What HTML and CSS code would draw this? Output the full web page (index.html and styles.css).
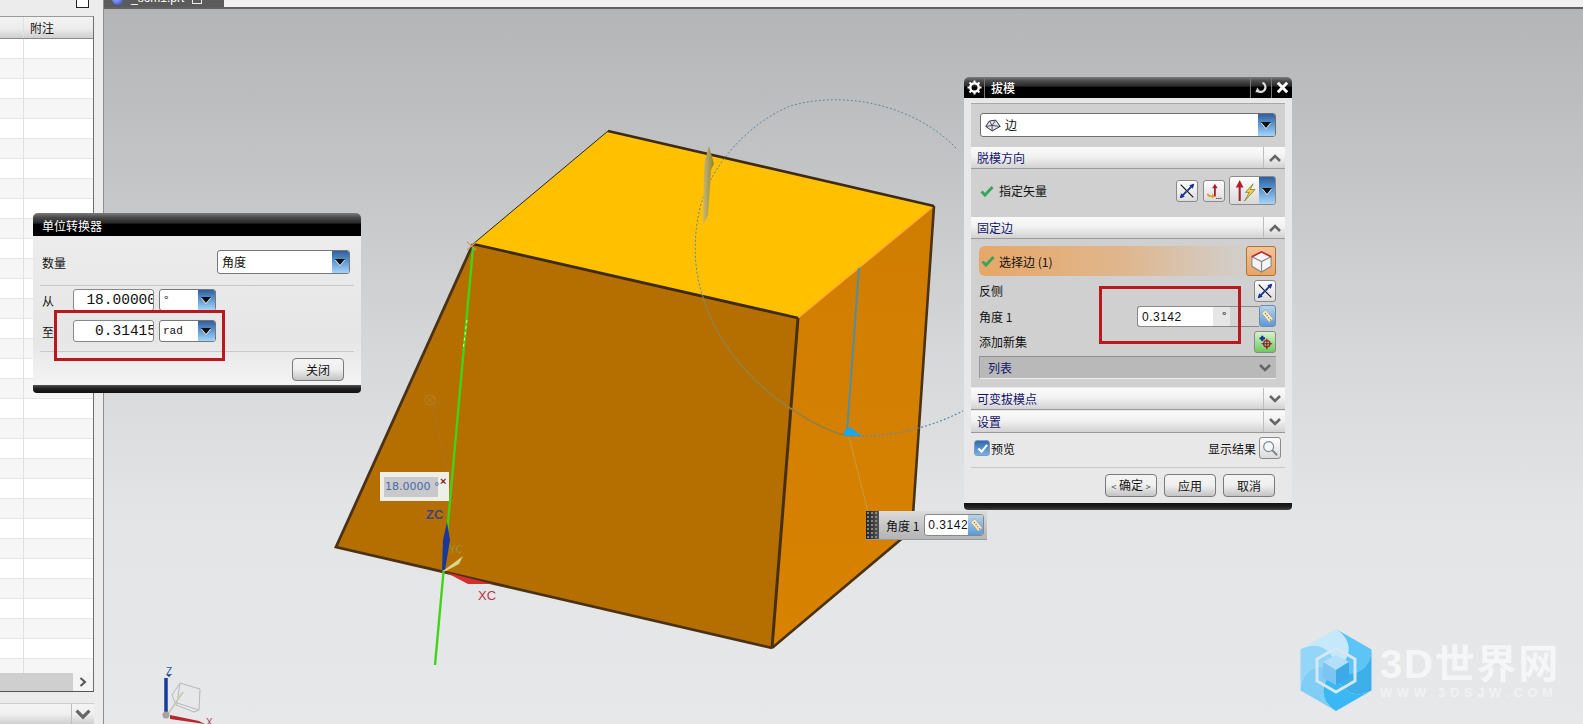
FILE: index.html
```html
<!DOCTYPE html>
<html lang="zh">
<head>
<meta charset="utf-8">
<title>拔模</title>
<link rel="stylesheet" href="styles.css">
</head>
<body>
<svg class="defs" width="0" height="0" aria-hidden="true">
  <symbol id="i-swap" viewBox="0 0 20 20">
    <path d="M3 3 17 17" stroke="#111" stroke-width="1.2"/>
    <path d="M17 3 10.5 9.5M3 17 9.5 10.5" stroke="#1a2f9a" stroke-width="2"/>
    <path d="M18 2 12.5 3.5 16.5 7.5ZM2 18 7.5 16.5 3.5 12.5Z" fill="#1a2f9a"/>
  </symbol>
  <symbol id="i-chev-up" viewBox="0 0 14 10"><path d="M2 8 7 3 12 8" fill="none" stroke="#666" stroke-width="2.6"/></symbol>
  <symbol id="i-chev-down" viewBox="0 0 14 10"><path d="M2 2 7 7 12 2" fill="none" stroke="#666" stroke-width="2.6"/></symbol>
  <symbol id="i-check" viewBox="0 0 14 12"><path d="M1.5 6.5 5 10 12.5 2" fill="none" stroke="#35a85e" stroke-width="3"/></symbol>
  <symbol id="i-ruler" viewBox="0 0 18 20">
    <path d="M2 6 7 2 16 13 11 17Z" fill="#f1ead0" stroke="#a89c70" stroke-width=".8"/>
    <path d="M6 7 7 6M8 9.500 9 8.500M10 12 11 11M12 14.500 13 13.500" stroke="#8a6a2a" stroke-width="1.300"/>
  </symbol>
</svg>

<div class="desktop">
  <aside class="side">
    <div class="side-top"><span class="mini-box"></span></div>
    <div class="table">
      <div class="thead"><span class="col-a"></span><span class="col-b">附注</span></div>
      <div class="tbody">
        <div class="row"><span class="col-a"></span><span class="col-b"></span></div>
        <div class="row"><span class="col-a"></span><span class="col-b"></span></div>
        <div class="row"><span class="col-a"></span><span class="col-b"></span></div>
        <div class="row"><span class="col-a"></span><span class="col-b"></span></div>
        <div class="row"><span class="col-a"></span><span class="col-b"></span></div>
        <div class="row"><span class="col-a"></span><span class="col-b"></span></div>
        <div class="row"><span class="col-a"></span><span class="col-b"></span></div>
        <div class="row"><span class="col-a"></span><span class="col-b"></span></div>
        <div class="row"><span class="col-a"></span><span class="col-b"></span></div>
        <div class="row"><span class="col-a"></span><span class="col-b"></span></div>
        <div class="row"><span class="col-a"></span><span class="col-b"></span></div>
        <div class="row"><span class="col-a"></span><span class="col-b"></span></div>
        <div class="row"><span class="col-a"></span><span class="col-b"></span></div>
        <div class="row"><span class="col-a"></span><span class="col-b"></span></div>
        <div class="row"><span class="col-a"></span><span class="col-b"></span></div>
        <div class="row"><span class="col-a"></span><span class="col-b"></span></div>
        <div class="row"><span class="col-a"></span><span class="col-b"></span></div>
        <div class="row"><span class="col-a"></span><span class="col-b"></span></div>
        <div class="row"><span class="col-a"></span><span class="col-b"></span></div>
        <div class="row"><span class="col-a"></span><span class="col-b"></span></div>
        <div class="row"><span class="col-a"></span><span class="col-b"></span></div>
        <div class="row"><span class="col-a"></span><span class="col-b"></span></div>
        <div class="row"><span class="col-a"></span><span class="col-b"></span></div>
        <div class="row"><span class="col-a"></span><span class="col-b"></span></div>
        <div class="row"><span class="col-a"></span><span class="col-b"></span></div>
        <div class="row"><span class="col-a"></span><span class="col-b"></span></div>
        <div class="row"><span class="col-a"></span><span class="col-b"></span></div>
        <div class="row"><span class="col-a"></span><span class="col-b"></span></div>
        <div class="row"><span class="col-a"></span><span class="col-b"></span></div>
        <div class="row"><span class="col-a"></span><span class="col-b"></span></div>
        <div class="row"><span class="col-a"></span><span class="col-b"></span></div>
        <div class="row"><span class="col-a"></span><span class="col-b"></span></div>
      </div>
      <div class="hscroll"><span class="thumb"></span><svg class="hs-arrow" viewBox="0 0 10 12"><path d="M2.500 2 7 6 2.500 10" fill="none" stroke="#555" stroke-width="2"/></svg></div>
    </div>
    <div class="side-foot"><span class="foot-btn"><svg class="foot-chev"><use href="#i-chev-down"/></svg></span></div>
  </aside>

  <main class="work">
    <div class="tabs">
      <div class="tab">
        <span class="ball"></span><span class="tab-name">_som1.prt</span><span class="tab-box"></span>
      </div>
    </div>
    <div class="viewport">
      <svg class="scene" viewBox="104 9 1479 715" preserveAspectRatio="none">
        <defs>
          <linearGradient id="g-right" x1="0" y1="0" x2="0" y2="1"><stop offset="0" stop-color="#cf7d02"/><stop offset="1" stop-color="#d88200"/></linearGradient>
          <linearGradient id="g-arrow" x1="0" y1="0" x2="1" y2="0"><stop offset="0" stop-color="#c9b877"/><stop offset="1" stop-color="#8f8333"/></linearGradient>
        </defs>
        <polygon points="798,318 934,206 912,530 772,648" fill="url(#g-right)"/>
        <polygon points="473,244 798,318 772,648 336,547" fill="#b56e00"/>
        <polygon points="608,131 934,206 798,318 473,244" fill="#ffc000"/>
        <path d="M798 318 934 206" stroke="#ffa838" stroke-width="1.500"/>
        <path d="M608 131 473 244" stroke="#2f2410" stroke-width="1"/>
        <path d="M608 131 934 206" stroke="#3d2a10" stroke-width="2.600"/>
        <path d="M473 244 798 318" stroke="#3d2a10" stroke-width="2.800"/>
        <path d="M934 206 912 530 772 648" fill="none" stroke="#4a3215" stroke-width="2.600"/>
        <path d="M798 318 772 648" stroke="#463012" stroke-width="3"/>
        <path d="M473 244 336 547 772 648" fill="none" stroke="#4a3215" stroke-width="2.800"/>

        <path d="M703 297C690 260 695 215 706 190 716 165 745 125 790 106 845 90 915 105 957 149" fill="none" stroke="#5c8aa0" stroke-width="1" stroke-dasharray="2 2"/>
        <path d="M703 297C712 330 740 375 790 408 815 425 835 434 850 436" fill="none" stroke="#97813a" stroke-width="1.500"/>
        <path d="M850 436C885 438 925 430 963 411" fill="none" stroke="#5f8ca6" stroke-width="1.200" stroke-dasharray="2 2"/>
        <path d="M859 268 847 432" stroke="#4f8fa4" stroke-width="2"/>
        <path d="M844 431 850 427 862 436 844 436Z" fill="#1fa6e0"/>
        <path d="M849 437 868 512" stroke="#c99a40" stroke-width="1"/>

        <path d="M709 146 714 164 711 170 708 215 703 225 704 170 705 160Z" fill="url(#g-arrow)"/>

        <path d="M467 242 476 250M476 242 467 250" stroke="#c9a06a" stroke-width="1.200"/>
        <circle cx="430" cy="400" r="5" fill="none" stroke="#bb8026" stroke-width="1"/>
        <path d="M425 395 435 405M435 395 425 405" stroke="#bb8026" stroke-width="1"/>
        <path d="M432 402 447 472M434 400 456 408" stroke="#a9742a" stroke-width=".8"/>

        <path d="M473 248 435 665" stroke="#3fd31a" stroke-width="2.400"/>
        <path d="M467 320 463 350" stroke="#e9f08a" stroke-width="1" stroke-dasharray="3 3"/>
        <path d="M447 522 450 540 445 570 442 570 443 540Z" fill="#17399c"/>
        <path d="M443 571 459 559 463 556 459 564 446 571Z" fill="#d8d48c"/>
        <path d="M445 572 492 584 468 584Z" fill="#d4302e"/>
        <text class="t-axis t-zc" x="426" y="519">ZC</text>
        <text class="t-axis t-yc" x="449" y="553">YC</text>
        <text class="t-axis t-xc" x="478" y="600">XC</text>

        <path d="M166 714 V678" stroke="#173c9a" stroke-width="3.500"/>
        <path d="M169 677 166.500 675 171 675" fill="#173c9a"/>
        <g fill="none" stroke="#b5b8bc" stroke-width="1">
          <path d="M180 683 200 689 199 710 177 703Z"/>
          <path d="M172 695 176 705 194 712 199 710M172 695 180 683M176 705 177 703"/>
        </g>
        <path d="M168 714 183 692" stroke="#c9ccb4" stroke-width="2"/>
        <circle cx="166" cy="715" r="3.500" fill="#a8a39e"/>
        <path d="M170 715 199 721 205 724 170 719Z" fill="#b8272b"/>
        <text class="t-triad t-z" x="166" y="675">Z</text>
        <text class="t-triad t-x" x="206" y="726">X</text>
      </svg>

      <div class="tag">
        <span class="tag-val">18.0000 °</span><span class="tag-x">×</span>
      </div>

      <div class="logo">
        <svg class="logo-mark" viewBox="0 0 72 82">
          <g>
            <path fill="#c5e8fa" d="M36 0 71.500 20.500C70.850 39.360 56.260 50.090 36 41 54 28 52 10 36 0Z" transform="rotate(-60 36 41)"/>
            <path fill="#5cc4f6" d="M36 0 71.500 20.500C70.850 39.360 56.260 50.090 36 41 54 28 52 10 36 0Z"/>
            <path fill="#3db0ea" d="M36 0 71.500 20.500C70.850 39.360 56.260 50.090 36 41 54 28 52 10 36 0Z" transform="rotate(60 36 41)"/>
            <path fill="#3ab8f4" d="M36 0 71.500 20.500C70.850 39.360 56.260 50.090 36 41 54 28 52 10 36 0Z" transform="rotate(120 36 41)"/>
            <path fill="#80cdf6" d="M36 0 71.500 20.500C70.850 39.360 56.260 50.090 36 41 54 28 52 10 36 0Z" transform="rotate(180 36 41)"/>
            <path fill="#93d6f8" d="M36 0 71.500 20.500C70.850 39.360 56.260 50.090 36 41 54 28 52 10 36 0Z" transform="rotate(240 36 41)"/>
          </g>
          <polygon points="36,19 55,30 55,52 36,63 17,52 17,30" fill="none" stroke="#d8e8f2" stroke-width="3"/>
          <polygon points="36,26 49,33 36,41 23,33" fill="#b2e0f9"/>
          <polygon points="23,33 36,41 36,56 23,49" fill="#7ac5f4"/>
          <polygon points="49,33 36,41 36,56 49,49" fill="#3da9e8"/>
        </svg>
        <div class="logo-text">
          <div class="logo-name">3D世界网</div>
          <div class="logo-url">WWW.3DSJW.COM</div>
        </div>
      </div>
    </div>
  </main>

  <section class="dlg dlg-convert">
    <header class="titlebar titlebar-plain"><span class="title">单位转换器</span></header>
    <div class="conv-body">
      <div class="conv-row conv-qty">
        <span class="lbl">数量</span>
        <div class="select select-qty"><span class="select-text">角度</span><span class="drop"></span></div>
      </div>
      <div class="rule rule-a"></div>
      <div class="conv-row conv-val">
        <span class="lbl lbl-short">从</span>
        <div class="num-box"><span class="num">18.00000</span></div>
        <div class="select select-unit"><span class="select-text">°</span><span class="drop"></span></div>
      </div>
      <div class="conv-row conv-val conv-to">
        <span class="lbl lbl-short">至</span>
        <div class="num-box"><span class="num">0.31415</span></div>
        <div class="select select-unit"><span class="select-text mono">rad</span><span class="drop"></span></div>
      </div>
      <div class="rule rule-b"></div>
      <div class="conv-actions"><button class="btn">关闭</button></div>
    </div>
    <footer class="dlg-foot"></footer>
  </section>
  <div class="mark mark-convert"></div>

  <section class="dlg dlg-draft">
    <header class="titlebar">
      <span class="tb-cell tb-gear">
        <svg viewBox="0 0 16 16" class="tb-icon"><circle cx="8" cy="8" r="4.500" fill="none" stroke="#fff" stroke-width="2.600"/><path d="M8 .5V3.500M8 12.500V15.500M.5 8H3.500M12.500 8H15.500M2.700 2.700 4.800 4.800M11.200 11.200 13.300 13.300M13.300 2.700 11.200 4.800M4.800 11.200 2.700 13.300" stroke="#fff" stroke-width="2.200"/></svg>
      </span>
      <span class="title title-draft">拔模</span>
      <span class="tb-cell tb-right">
        <svg viewBox="0 0 16 16" class="tb-icon"><path d="M4 11.500A5 5 0 1 0 9 3" fill="none" stroke="#ddd" stroke-width="2.400"/><path d="M3.500 8 1.500 13 7 13Z" fill="#ddd"/></svg>
      </span>
      <span class="tb-cell tb-right">
        <svg viewBox="0 0 16 16" class="tb-icon"><path d="M3 3 13 13M13 3 3 13" stroke="#fff" stroke-width="3.200"/></svg>
      </span>
    </header>

    <div class="draft-body">
      <div class="panel panel-type">
        <div class="select select-type">
          <svg class="type-icon" viewBox="0 0 20 16"><path d="M6 3 13 2 18 9 9 14 2 9Z" fill="#dfe4ec" stroke="#334" stroke-width="1.100"/><path d="M6 3 9 8 13 2M9 8 9 14M2 9 9 8 18 9" fill="none" stroke="#334" stroke-width=".9"/></svg>
          <span class="select-text">边</span><span class="drop"></span>
        </div>
      </div>

      <div class="group-head"><span class="gh-text">脱模方向</span><span class="gh-btn"><svg class="chev"><use href="#i-chev-up"/></svg></span></div>
      <div class="panel panel-vector">
        <svg class="check"><use href="#i-check"/></svg>
        <span class="row-text">指定矢量</span>
        <span class="spacer"></span>
        <button class="icon-btn"><svg class="ib"><use href="#i-swap"/></svg></button>
        <button class="icon-btn">
          <svg class="ib" viewBox="0 0 20 20"><path d="M11 16V5" stroke="#a1202a" stroke-width="2"/><path d="M11 2 8 7H14Z" fill="#a1202a"/><path d="M3 13C3 16 6 16 9 16" fill="none" stroke="#e59a2a" stroke-width="2"/><path d="M8 12.500 11 16 8 18Z" fill="#e59a2a"/><text class="dots" x="12" y="19">...</text></svg>
        </button>
        <div class="combo">
          <span class="combo-main">
            <svg class="combo-icon" viewBox="0 0 28 26"><path d="M9 24V8" stroke="#a1202a" stroke-width="2.200"/><path d="M9 2 5 10H13Z" fill="#b31f2a"/><path d="M23 6 15 15H19L14 24 25 12H20Z" fill="#e8d34a" stroke="#7d6a20" stroke-width=".7"/></svg>
          </span>
          <span class="drop drop-tall"></span>
        </div>
      </div>

      <div class="group-head"><span class="gh-text">固定边</span><span class="gh-btn"><svg class="chev"><use href="#i-chev-up"/></svg></span></div>
      <div class="panel panel-edge">
        <div class="sel-row">
          <svg class="check"><use href="#i-check"/></svg>
          <span class="row-text">选择边 (1)</span>
          <span class="spacer"></span>
          <button class="cube-btn">
            <svg class="cube-ic" viewBox="0 0 26 26"><path d="M13 3 23 8V18L13 24 3 18V8Z" fill="#f4f4f4" stroke="#888" stroke-width="1.200"/><path d="M3 8 13 13 23 8M13 13V24" fill="none" stroke="#888" stroke-width="1.200"/><path d="M3 8 13 3 23 8" fill="none" stroke="#c0292a" stroke-width="1.600"/></svg>
          </button>
        </div>
        <div class="form-row">
          <span class="row-text">反侧</span><span class="spacer"></span>
          <button class="icon-btn"><svg class="ib"><use href="#i-swap"/></svg></button>
        </div>
        <div class="form-row form-angle">
          <span class="row-text">角度 1</span><span class="spacer"></span>
          <div class="angle-field"><span class="angle-val">0.3142</span><span class="angle-unit">°</span></div>
          <span class="ruler-btn"><svg class="ruler"><use href="#i-ruler"/></svg></span>
        </div>
        <div class="form-row">
          <span class="row-text">添加新集</span><span class="spacer"></span>
          <button class="icon-btn icon-btn-add">
            <svg class="ib" viewBox="0 0 20 20"><path d="M4 6H10M7 3V9" stroke="#1a2f9a" stroke-width="2.400"/><circle cx="12" cy="12" r="3.500" fill="none" stroke="#a1202a" stroke-width="1.500"/><path d="M12 6V18M6 12H18" stroke="#8c1a20" stroke-width="1.200"/></svg>
          </button>
        </div>
        <div class="list-head"><span>列表</span><svg class="chev"><use href="#i-chev-down"/></svg></div>
      </div>

      <div class="group-head group-head-gap"><span class="gh-text">可变拔模点</span><span class="gh-btn"><svg class="chev"><use href="#i-chev-down"/></svg></span></div>
      <div class="group-head group-head-gap"><span class="gh-text">设置</span><span class="gh-btn"><svg class="chev"><use href="#i-chev-down"/></svg></span></div>

      <div class="preview-row">
        <span class="checkbox"><svg viewBox="0 0 14 14" class="cb-mark"><path d="M2.500 7 6 10.500 12 3" fill="none" stroke="#fff" stroke-width="2.200"/></svg></span>
        <span class="row-text">预览</span><span class="spacer"></span>
        <span class="row-text">显示结果</span>
        <button class="icon-btn icon-btn-search">
          <svg class="ib" viewBox="0 0 20 20"><circle cx="8.500" cy="8.500" r="5.500" fill="#f5f8fa" stroke="#7c8894" stroke-width="1.300"/><path d="M12.500 12.500 18 18" stroke="#7c8894" stroke-width="2.200"/></svg>
        </button>
      </div>
      <div class="rule rule-draft"></div>
      <div class="actions">
        <button class="btn"><span class="angle-mark">&lt;</span> 确定 <span class="angle-mark">&gt;</span></button>
        <button class="btn">应用</button>
        <button class="btn">取消</button>
      </div>
    </div>
    <footer class="dlg-foot dlg-foot-draft"></footer>
  </section>
  <div class="mark mark-draft"></div>

  <div class="callout">
    <span class="grip"></span>
    <span class="callout-label">角度 1</span>
    <div class="callout-field"><span class="callout-val">0.3142</span><span class="ruler-btn ruler-btn-s"><svg class="ruler"><use href="#i-ruler"/></svg></span></div>
  </div>
</div>
</body>
</html>
```
FILE: styles.css
```css
* { box-sizing: border-box; }
html, body { margin: 0; padding: 0; height: 100%; overflow: hidden; }
body { font-family: "Noto Sans CJK SC", "Liberation Sans", sans-serif; font-size: 12px; color: #111; }
.defs { position: absolute; }
button { font: inherit; padding: 0; margin: 0; }

.desktop { position: relative; width: 1583px; height: 724px; display: flex; background: #e9e9e9; overflow: hidden; }

/* left list panel */
.side { width: 104px; flex: none; display: flex; flex-direction: column; background: #ececec; border-right: 1px solid #8f8f8f; }
.side-top { height: 16px; display: flex; justify-content: flex-end; padding-right: 14px; }
.mini-box { width: 13px; height: 8px; border: 1px solid #222; border-top: 0; background: #fff; }
.table { width: 94px; height: 676px; border-top: 1px solid #9a9a9a; border-right: 1px solid #6e6e6e; border-bottom: 1px solid #555; display: flex; flex-direction: column; }
.thead { height: 22px; flex: none; display: flex; background: linear-gradient(#f3f3f3, #ececec 55%, #cfcfcf); border-bottom: 1px solid #8a8a8a; }
.col-a { width: 24px; flex: none; border-right: 1px solid #e0e0e0; }
.col-b { flex: 1; padding-left: 6px; line-height: 21px; }
.tbody { flex: 1; overflow: hidden; }
.row { height: 20px; display: flex; background: #fff; border-bottom: 1px solid #e6e6e6; }
.row:nth-child(even) { background: #f6f6f6; }
.hscroll { height: 18px; flex: none; display: flex; align-items: stretch; background: #f4f4f4; }
.thumb { width: 73px; background: #cfcfcf; }
.hs-arrow { width: 10px; height: 12px; margin: 3px 0 0 5px; }
.side-foot { margin: 11px 0 0; width: 94px; height: 21px; border-top: 1px solid #cfcfcf; display: flex; justify-content: flex-end; background: linear-gradient(#f4f4f4, #f0f0f0 50%, #cfcfcf); }
.foot-btn { width: 23px; border-left: 1px solid #bdbdbd; display: flex; justify-content: center; }
.foot-chev { width: 18px; height: 13px; margin-top: 4px; }

/* work area */
.work { flex: 1; display: flex; flex-direction: column; min-width: 0; }
.tabs { height: 9px; flex: none; background: #f0f0f0; border-bottom: 2px solid #616161; }
.tab { width: 120px; height: 7px; background: #5b5b5b; display: flex; align-items: flex-start; overflow: hidden; padding-left: 8px; color: #fff; }
.ball { width: 11px; height: 11px; margin-top: -6px; border-radius: 50%; background: radial-gradient(circle at 40% 40%, #9fb3ff, #2a3fc0); flex: none; }
.tab-name { margin: -10px 0 0 8px; line-height: 17px; font-family: "Liberation Sans", sans-serif; font-size: 12px; }
.tab-box { width: 10px; height: 10px; margin: -6px 0 0 8px; border: 1px solid #eee; }
.viewport { flex: 1; position: relative; overflow: hidden; background: linear-gradient(#b4b5b6 0, #c4c5c6 170px, #d6d7d8 340px, #e3e4e6 500px, #e7e8ea 100%); }
.scene { position: absolute; inset: 0; width: 100%; height: 100%; display: block; }
.t-axis { font-family: "Liberation Sans", sans-serif; font-size: 13px; font-weight: 700; }
.t-zc { fill: #43447a; }
.t-yc { fill: #96963a; font-size: 10px; font-weight: 400; }
.t-xc { fill: #b43a46; font-weight: 400; }
.t-triad { font-family: "Liberation Sans", sans-serif; font-size: 10px; }
.t-z { fill: #2a57b0; }
.t-x { fill: #b43a46; }

.tag { position: absolute; left: 276px; top: 463px; width: 69px; height: 29px; background: #efefe9; padding: 5px 0 0 4px; display: flex; }
.tag-val { width: 54px; height: 20px; background: #c9c9cb; color: #4a6aa8; line-height: 19px; font-family: "DejaVu Sans", sans-serif; font-size: 11px; white-space: nowrap; padding-left: 1px; }
.tag-x { color: #8a1a2a; font-size: 11px; line-height: 8px; font-weight: 700; margin-left: 2px; font-family: "Liberation Sans", sans-serif; }

.logo { position: absolute; left: 1196px; top: 620px; display: flex; gap: 8px; }
.logo-mark { width: 72px; height: 82px; flex: none; }
.logo-text { padding-top: 13px; color: #f5f6f7; }
.logo-name { font-family: "Liberation Sans", "Noto Sans CJK SC", sans-serif; font-weight: 700; font-size: 40px; line-height: 44px; letter-spacing: 1.800px; white-space: nowrap; }
.logo-url { font-family: "Liberation Sans", sans-serif; font-weight: 700; font-size: 13px; line-height: 14px; letter-spacing: 4.600px; white-space: nowrap; color: #f1f2f3; }

/* dialogs */
.dlg { position: absolute; background: #e8e8e8; border-radius: 5px 5px 4px 4px; display: flex; flex-direction: column; overflow: hidden; }
.titlebar { height: 21px; flex: none; display: flex; align-items: stretch; background: linear-gradient(#7c7c7c 0, #4c4c4c 18%, #2a2a2a 42%, #000 50%, #000 100%); color: #fff; }
.titlebar-plain { height: 23px; }
.title { padding-left: 9px; line-height: 25px; font-size: 12px; flex: 1; }
.title-draft { padding-left: 6px; line-height: 21px; font-weight: 500; }
.tb-cell { width: 21px; display: flex; align-items: center; justify-content: center; border-left: 1px solid #777; }
.tb-gear { border-left: 0; border-right: 1px solid #777; }
.tb-icon { width: 15px; height: 15px; }
.dlg-foot { height: 8px; flex: none; background: linear-gradient(#555, #222 40%, #111); }
.dlg-foot-draft { height: 7px; background: linear-gradient(#111, #222 60%, #444); }

.select { display: flex; align-items: center; background: #fff; border: 1px solid #777; border-radius: 3px; overflow: hidden; }
.select-text { flex: 1; padding-left: 4px; line-height: 18px; white-space: nowrap; }
.mono { font-family: "Liberation Mono", monospace; font-size: 11px; padding-left: 3px; }
.drop { width: 17px; align-self: stretch; flex: none; background: linear-gradient(#2f5f9e, #5b95cf 45%, #a6d4f6); position: relative; }
.drop::after { content: ""; position: absolute; left: 3px; top: 50%; margin-top: -3px; border: 5px solid transparent; border-top: 6px solid #111; border-bottom: 0; filter: drop-shadow(0 1px 0 #fff); }
.drop-tall { width: 16px; }

/* unit converter */
.dlg-convert { left: 33px; top: 213px; width: 328px; height: 180px; }
.conv-body { flex: 1; padding: 14px 9px 0 9px; background: linear-gradient(#ececec, #e6e6e6 70%, #f4f4f4); }
.conv-row { display: flex; align-items: center; }
.conv-qty { height: 24px; }
.lbl { width: 175px; flex: none; }
.lbl-short { width: 31px; }
.select-qty { width: 133px; height: 24px; }
.rule { height: 1px; background: #c8c8c8; flex: none; }
.conv-body > .rule-a { margin: 11px -2px 3px; }
.conv-body > .rule-b { margin: 9px -2px 6px; }
.conv-val { height: 22px; gap: 5px; }
.conv-val .lbl-short { margin-right: -5px; }
.conv-to { margin-top: 9px; }
.num-box { width: 81px; height: 22px; background: #fff; border: 1px solid #888; border-radius: 3px; display: flex; justify-content: flex-end; overflow: hidden; white-space: nowrap; }
.num { flex: none; margin-right: -3px; font-family: "Liberation Mono", monospace; font-size: 14.500px; line-height: 21px; }
.select-unit { width: 57px; height: 22px; }
.conv-actions { display: flex; justify-content: flex-end; padding-right: 8px; }
.btn { width: 52px; height: 23px; border: 1px solid #7a7a7a; border-radius: 4px; background: linear-gradient(#f4f4f4, #efefef 50%, #c4c4c4); color: #111; line-height: 20px; white-space: nowrap; }
.angle-mark { font-size: 9px; color: #444; }

.mark { position: absolute; border: 3px solid #b7191e; }
.mark-convert { left: 54px; top: 310px; width: 171px; height: 51px; }
.mark-draft { left: 1099px; top: 286px; width: 142px; height: 58px; }

/* draft dialog */
.dlg-draft { left: 964px; top: 77px; width: 328px; height: 433px; }
.draft-body { flex: 1; padding: 5px 7px 0; display: flex; flex-direction: column; }
.panel { background: #d0d0d0; flex: none; }
.panel-type { height: 44px; padding: 9px 9px 0; border-top: 1px solid #a8a8a8; }
.select-type { height: 24px; border-color: #6f6f6f; }
.select-type .select-text { padding-left: 3px; }
.type-icon { width: 18px; height: 15px; margin-left: 3px; flex: none; }
.group-head { height: 22px; flex: none; display: flex; background: linear-gradient(#fafafa, #f2f2f2 45%, #d2d2d2); border-bottom: 1px solid #9a9a9a; color: #14146a; }
.group-head-gap { margin-top: 1px; }
.gh-text { flex: 1; line-height: 22px; padding-left: 6px; white-space: nowrap; }
.gh-btn { width: 22px; display: flex; align-items: center; justify-content: center; border-left: 1px solid #bdbdbd; }
.chev { width: 14px; height: 10px; flex: none; }
.panel-vector { height: 48px; display: flex; align-items: center; padding: 0 9px 5px; gap: 5px; }
.check { width: 14px; height: 12px; flex: none; }
.row-text { white-space: nowrap; }
.spacer { flex: 1; }
.icon-btn { width: 22px; height: 22px; flex: none; border: 1px solid #8a8a8a; border-radius: 3px; background: linear-gradient(#fdfdfd, #dcdcdc); display: flex; align-items: center; justify-content: center; }
.ib { width: 18px; height: 18px; display: block; }
.dots { font-family: "Liberation Sans", sans-serif; font-size: 8px; font-weight: 700; fill: #222; }
.combo { width: 47px; height: 29px; flex: none; display: flex; border: 1px solid #8a8a8a; border-radius: 3px; overflow: hidden; margin-left: -1px; }
.combo-main { flex: 1; display: flex; align-items: center; justify-content: center; background: linear-gradient(#fdfdfd, #d8d8d8); }
.combo-icon { width: 27px; height: 25px; }

.panel-edge { height: 148px; padding: 7px 9px 0 8px; display: flex; flex-direction: column; }
.sel-row { height: 30px; display: flex; align-items: center; gap: 4px; padding-left: 2px; margin-bottom: 2px; border-radius: 6px; background: linear-gradient(90deg, #e7a768, #dfb78f 50%, #d3cdc6 85%, #d0d0d0); flex: none; }
.cube-btn { width: 30px; height: 30px; flex: none; border: 1px solid #b3702f; border-radius: 3px; background: linear-gradient(#f2c49a, #e8a468); display: flex; align-items: center; justify-content: center; }
.cube-ic { width: 25px; height: 25px; }
.form-row { height: 25px; flex: none; display: flex; align-items: center; }
.form-angle { height: 26px; }
.angle-field { width: 122px; height: 21px; display: flex; border: 1px solid #8a8a8a; border-right: 0; border-radius: 3px 0 0 3px; background: linear-gradient(90deg, #fff, #fff 62%, #e6e6e6 62%, #e6e6e6 76%, #d4d4d4 76%); }
.angle-val { width: 78px; padding-left: 4px; line-height: 20px; font-family: "Liberation Sans", sans-serif; font-size: 12px; letter-spacing: .5px; }
.angle-unit { padding-left: 6px; line-height: 18px; }
.ruler-btn { width: 17px; height: 22px; flex: none; border-radius: 3px; background: linear-gradient(#b7d3ea, #5c9ad6); border: 1px solid #6d8cb0; display: flex; align-items: center; justify-content: center; }
.ruler { width: 15px; height: 17px; }
.icon-btn-add { background: linear-gradient(#d6f3cf, #6ec95e); }
.list-head { height: 23px; flex: none; margin-top: 2px; background: #b9b9b9; border-top: 1px solid #8f8f8f; border-bottom: 1px solid #eee; border-left: 1px solid #999; display: flex; align-items: center; justify-content: space-between; padding: 0 4px 0 8px; color: #14146a; }
.preview-row { height: 24px; margin-top: 3px; flex: none; display: flex; align-items: center; padding: 0 4px 0 3px; }
.checkbox { width: 16px; height: 16px; flex: none; border-radius: 3px; background: linear-gradient(#2f6cb0, #79aee0); border: 1px solid #7e9cbf; display: flex; align-items: center; justify-content: center; margin-right: 1px; }
.cb-mark { width: 13px; height: 13px; }
.icon-btn-search { margin-left: 3px; }
.draft-body > .rule-draft { margin-top: 7px; }
.actions { display: flex; justify-content: flex-end; gap: 7px; padding: 6px 10px 0 0; }

/* floating angle callout */
.callout { position: absolute; left: 866px; top: 511px; width: 121px; height: 29px; display: flex; align-items: center; background: linear-gradient(#dcdcdc, #c2c2c2 60%, #b4b4b4); border-bottom: 1px solid #9a9a9a; }
.grip { width: 13px; height: 100%; flex: none; background: radial-gradient(circle, #888 1px, transparent 1.500px) 0 0/4px 4px, linear-gradient(90deg, #222, #555); }
.callout-label { margin-left: 7px; white-space: nowrap; }
.callout-field { width: 60px; height: 22px; margin-left: 5px; background: #fff; border: 1px solid #888; border-radius: 3px; display: flex; align-items: center; overflow: hidden; }
.callout-val { flex: 1; padding-left: 3px; font-family: "Liberation Sans", sans-serif; letter-spacing: .5px; white-space: nowrap; }
.ruler-btn-s { height: 100%; border: 0; border-radius: 0; }
```
